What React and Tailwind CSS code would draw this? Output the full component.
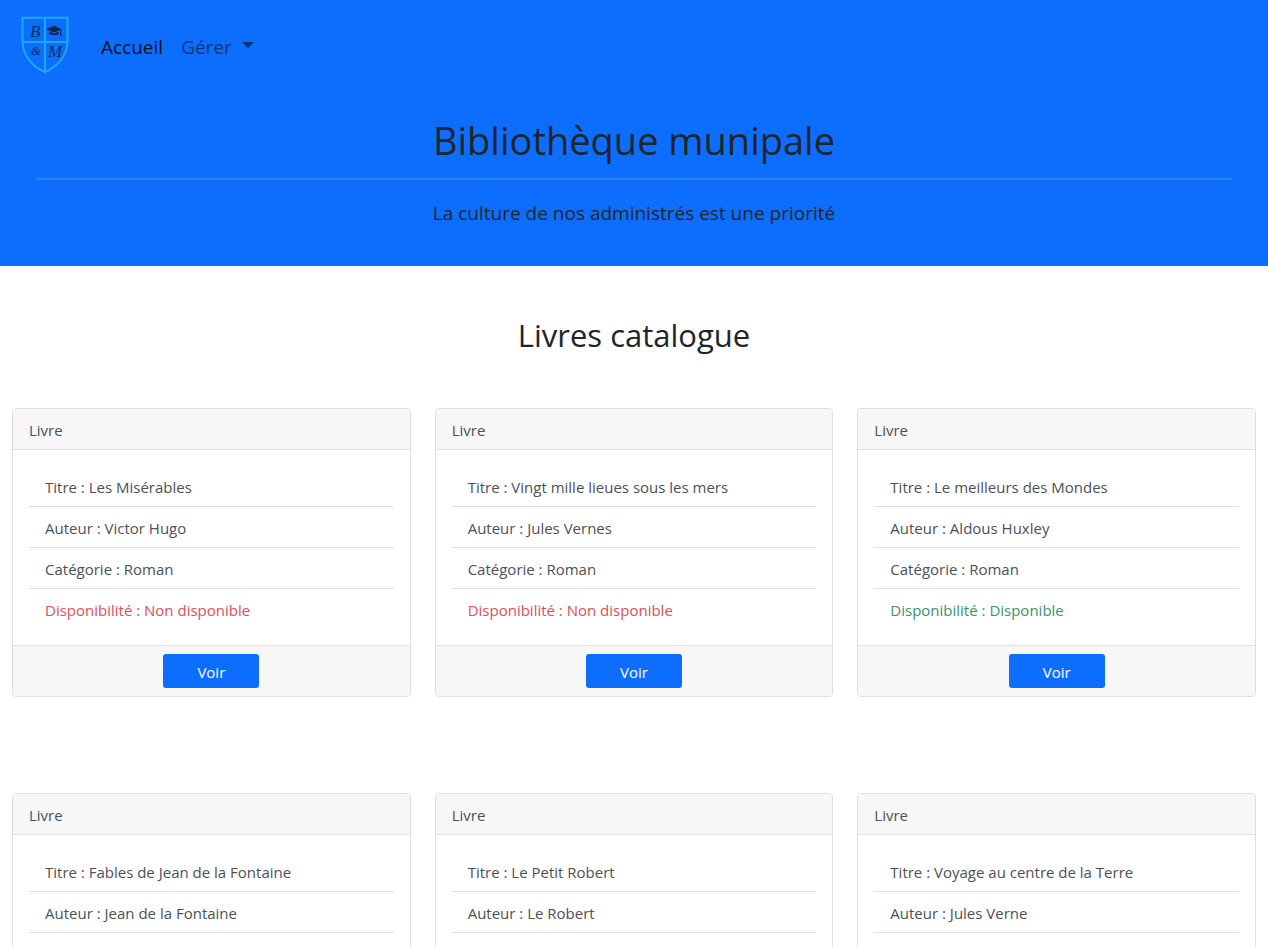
const books = [
  { titre: "Les Misérables", auteur: "Victor Hugo", categorie: "Roman", disponible: false },
  { titre: "Vingt mille lieues sous les mers", auteur: "Jules Vernes", categorie: "Roman", disponible: false },
  { titre: "Le meilleurs des Mondes", auteur: "Aldous Huxley", categorie: "Roman", disponible: true },
  { titre: "Fables de Jean de la Fontaine", auteur: "Jean de la Fontaine", categorie: "Roman", disponible: true },
  { titre: "Le Petit Robert", auteur: "Le Robert", categorie: "Roman", disponible: true },
  { titre: "Voyage au centre de la Terre", auteur: "Jules Verne", categorie: "Roman", disponible: true },
];

function Logo() {
  return (
    <svg width="48" height="58" viewBox="0 0 48 58" aria-label="Bibliothèque municipale" role="img">
      <path
        d="M1.5 1.8H46.5V25C46.5 39 37 50.5 24 56.2C11 50.5 1.5 39 1.5 25Z M24 1.8V56 M1.5 26H46.5"
        fill="none"
        stroke="#18a9f2"
        strokeWidth="2"
      />
      <g fill="#0a2f66" fontFamily="'Liberation Serif', serif" fontStyle="italic">
        <text x="9" y="21" fontSize="17">B</text>
        <text x="10" y="39" fontSize="13">&amp;</text>
        <text x="27" y="41" fontSize="17">M</text>
      </g>
      <g fill="#06264f">
        <path d="M33 9.7L41 13.2L33 16.5L25 13.2Z" />
        <path d="M28.3 15.6L33 17.6L37.7 15.6V18.2C35.6 19.4 34.6 18.6 33 19.4C31.4 18.6 30.4 19.4 28.3 18.2Z" />
        <path d="M39.3 13.8H40.1V17.2L40.6 19.5H38.8L39.3 17.2Z" />
      </g>
    </svg>
  );
}

function Navbar() {
  return (
    <nav className="flex h-[90px] items-center px-[21px] text-[19px] leading-[30px]">
      <a href="#accueil" className="mr-8 block">
        <Logo />
      </a>
      <div className="flex items-center gap-[18px] pt-1">
        <a href="#accueil" className="text-black/90">Accueil</a>
        <button type="button" aria-haspopup="menu" className="flex items-center gap-2.5 text-black/55">
          Gérer
          <svg className="mb-1" width="12" height="6" viewBox="0 0 12 6" aria-hidden="true">
            <path d="M0 0H12L6 6Z" fill="currentColor" />
          </svg>
        </button>
      </div>
    </nav>
  );
}

function BookCard({ book }) {
  return (
    <article className="overflow-hidden rounded border border-[#dfdfdf] bg-white text-[15px] leading-6 text-[#4d5154]">
      <header className="border-b border-[#dfdfdf] bg-[#f7f7f7] px-4 pt-[9px] pb-[7px]">Livre</header>
      <ul className="divide-y divide-[#dfdfdf] p-4">
        <li className="px-4 pt-[9px] pb-[7px]">Titre : {book.titre}</li>
        <li className="px-4 pt-[9px] pb-[7px]">Auteur : {book.auteur}</li>
        <li className="px-4 pt-[9px] pb-[7px]">Catégorie : {book.categorie}</li>
        <li className={book.disponible ? "px-4 pt-[9px] pb-[7px] text-[#3c936a]" : "px-4 pt-[9px] pb-[7px] text-[#e04d5b]"}>
          Disponibilité : {book.disponible ? "Disponible" : "Non disponible"}
        </li>
      </ul>
      <footer className="flex justify-center border-t border-[#dfdfdf] bg-[#f7f7f7] p-2">
        <button type="button" className="h-[34px] w-24 rounded-[3px] bg-[#0d6efd] pt-0.5 text-white">
          Voir
        </button>
      </footer>
    </article>
  );
}

export default function App() {
  return (
    <div className="bg-white font-['Open_Sans','Noto_Sans',sans-serif] text-[#212529]">
      <header className="bg-[#0d6efd]">
        <Navbar />
        <div className="px-9 pt-[26px] pb-[38px] text-center">
          <h1 className="text-[38px] leading-12">Bibliothèque munipale</h1>
          <hr className="mt-[14px] mb-[18px] border-t-2 border-[#3080f9]" />
          <p className="text-[19px] leading-[30px]">La culture de nos administrés est une priorité</p>
        </div>
      </header>
      <main className="px-3 pt-[46px] pb-24">
        <h2 className="mb-[50px] text-center text-[31px] leading-[46px]">Livres catalogue</h2>
        <section className="grid grid-cols-3 gap-x-6 gap-y-24">
          {books.map((book) => (
            <BookCard key={book.titre} book={book} />
          ))}
        </section>
      </main>
    </div>
  );
}
